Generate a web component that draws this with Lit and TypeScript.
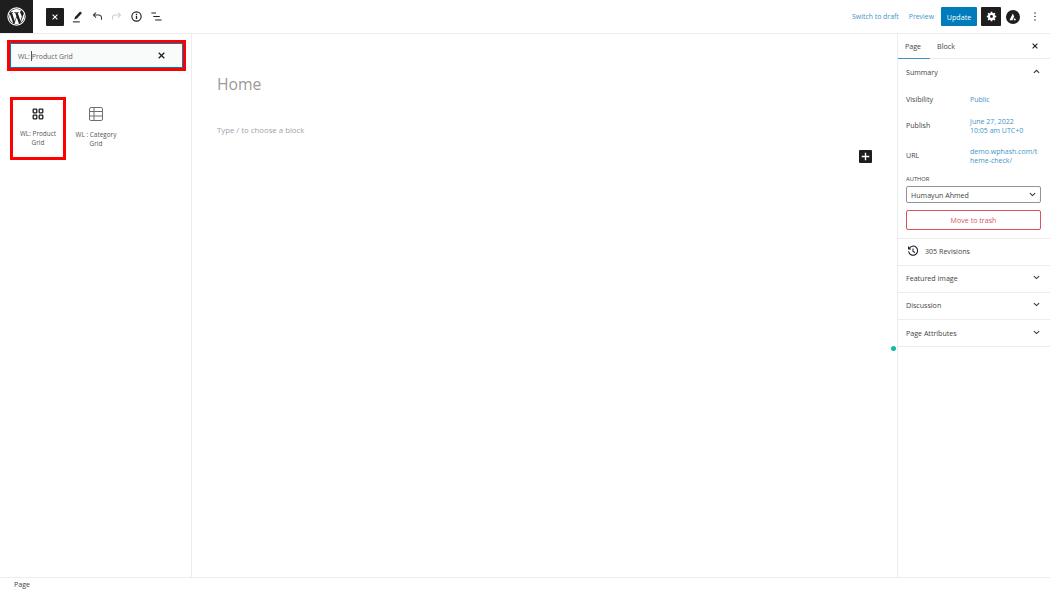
import { LitElement, html, css } from "lit";
import { customElement } from "lit/decorators.js";

const chevDown = html`<svg class="chev" viewBox="0 0 12 8" width="7" height="5"><path d="M1.5 1.5 6 5.8l4.5-4.3" fill="none" stroke="#333" stroke-width="1.8"/></svg>`;
const chevUp = html`<svg class="chev" viewBox="0 0 12 8" width="7" height="5"><path d="M1.5 6.2 6 1.9l4.5 4.3" fill="none" stroke="#333" stroke-width="1.8"/></svg>`;
const closeX = (c = "#1e1e1e", s = 6) => html`<svg viewBox="0 0 10 10" width=${s} height=${s}><path d="M1 1l8 8M9 1l-8 8" fill="none" stroke=${c} stroke-width="1.8"/></svg>`;

@customElement("app-root")
export class AppRoot extends LitElement {
  static styles = css`
    :host { display: block; width: 1050px; height: 590px; background: #fff; color: #444; font-family: "Open Sans", sans-serif; font-size: 7.1px; overflow: hidden; }
    .app { position: relative; display: flex; flex-direction: column; height: 590px; }
    header { display: flex; align-items: center; height: 33px; box-sizing: content-box; flex: none; border-bottom: 1px solid #eceded; margin-bottom: -1px; }
    .logo { width: 33px; height: 33px; background: #1e1e1e; display: flex; align-items: center; justify-content: center; flex: none; }
    .tools { display: flex; align-items: center; margin-left: 13px; }
    .close-tool { width: 18px; height: 18px; background: #1e1e1e; border-radius: 1px; display: flex; align-items: center; justify-content: center; margin-right: 4px; }
    .tool { width: 19.6px; height: 20px; display: flex; align-items: center; justify-content: center; }
    .actions { margin-left: auto; display: flex; align-items: center; padding-right: 13px; }
    .link { color: #3f94c6; font-size: 6.9px; }
    .preview { margin-left: 10px; }
    .update { margin-left: 7px; width: 36px; height: 19px; background: #007cba; color: #fff; border-radius: 1px; display: flex; align-items: center; justify-content: center; font-size: 7.1px; }
    .gear { margin-left: 4px; width: 20px; height: 19px; background: #1e1e1e; border-radius: 1px; display: flex; align-items: center; justify-content: center; }
    .astra { margin-left: 5px; display: flex; }
    .dots { margin-left: 13px; width: 4px; display: flex; justify-content: center; }
    .body { flex: 1; display: flex; min-height: 0; }
    .left { width: 179px; border-right: 1px solid #eceded; flex: none; padding: 7px 5px 0 7px; }
    .search { height: 31px; box-sizing: border-box; border: 3px solid #f00; display: flex; }
    .search-in { flex: 1; border: 1.5px solid #007cba; background: #f9fafa; display: flex; align-items: center; padding: 0 17px 0 7px; color: #666; font-size: 6.9px; }
    .caret { display: inline-block; width: 1px; height: 10px; background: #555; vertical-align: -2px; margin: 0 0 0 1px; }
    .search-in .txt { flex: 1; }
    .tiles { display: flex; margin: 26px 0 0 3px; gap: 2px; }
    .tile { width: 56px; height: 63px; box-sizing: border-box; display: flex; flex-direction: column; align-items: center; text-align: center; color: #555; font-size: 6.4px; line-height: 9px; padding-top: 9px; }
    .tile.on { border: 3px solid #f00; padding-top: 7px; }
    .tile svg { margin-bottom: 8px; flex: none; }
    .main { flex: 1; position: relative; padding: 40px 0 0 25px; min-width: 0; }
    h1 { margin: 0; font-size: 15.7px; font-weight: 400; color: #9a9a9a; line-height: 22px; }
    .hint { margin-top: 30px; color: #9ea3a8; font-size: 7.8px; line-height: 11px; }
    .plus { position: absolute; left: 667px; top: 117px; width: 13px; height: 13px; background: #1e1e1e; border-radius: 1px; display: flex; align-items: center; justify-content: center; }
    .dot { position: absolute; left: 891px; top: 346px; width: 5px; height: 5px; border-radius: 50%; background: #14b8a6; }
    .right { width: 152px; flex: none; border-left: 1px solid #eceded; }
    .tabs { display: flex; align-items: center; height: 25px; border-bottom: 1px solid #eceded; position: relative; }
    .tab { width: 32px; height: 25px; display: flex; align-items: center; justify-content: center; box-sizing: border-box; font-size: 7.1px; padding-right: 2px; }
    .tab.on { border-bottom: 1px solid #3f94c6; margin-bottom: -1px; height: 26px; }
    .tab.b { margin-left: 4px; flex: none; width: 26px; }
    .tabs .x { margin-left: auto; margin-right: 12px; display: flex; }
    .panel { border-bottom: 1px solid #eceded; padding: 0 9px 0 8px; }
    .phead { display: flex; align-items: center; justify-content: space-between; height: 26px; padding: 0 1px 1px 0; box-sizing: border-box; font-size: 7.1px; }
    .phead.low { padding-bottom: 3px; }
    .summary { height: 180px; box-sizing: border-box; }
    .row { display: grid; grid-template-columns: 64px 1fr; align-items: center; line-height: 9.5px; }
    .row .link { word-break: break-all; width: 69px; font-size: 7px; }
    .r1 { margin-top: 8px; height: 14px; }
    .r2, .r3 { margin-top: 8px; height: 22px; }
    .lbl { margin-top: 8px; font-size: 5.8px; line-height: 8px; }
    .select { margin-top: 3px; height: 17px; box-sizing: border-box; border: 1px solid #8f949a; border-radius: 2px; display: flex; align-items: center; justify-content: space-between; padding: 0 4px; }
    .trash { margin-top: 7px; height: 20px; box-sizing: border-box; border: 1px solid #d9545c; border-radius: 2px; color: #d9545c; display: flex; align-items: center; justify-content: center; }
    .rev { display: flex; align-items: center; gap: 6px; padding: 0 8px 2px 9px; box-sizing: border-box; height: 27px; border-bottom: 1px solid #eceded; }
    footer { height: 13px; box-sizing: border-box; flex: none; border-top: 1px solid #eceded; padding-left: 14px; line-height: 13px; }
  `;

  render() {
    return html`<div class="app">
      <header>
        <div class="logo">
          <svg viewBox="0 0 20 20" width="19" height="19"><circle cx="10" cy="10" r="9.1" fill="none" stroke="#fff" stroke-width="1.1"/><path fill="#fff" d="M2.2 10c0 3.1 1.8 5.7 4.4 7L2.9 6.8C2.5 7.8 2.2 8.9 2.2 10zm13.1-.4c0-1-.4-1.6-.7-2.2-.4-.6-.8-1.2-.8-1.8 0-.7.5-1.4 1.3-1.4h.1C13.8 3 12 2.2 10 2.2 7.3 2.2 4.9 3.6 3.5 5.7h.5c.8 0 2.1-.1 2.1-.1.4 0 .5.6.1.6 0 0-.4 0-.9.1l2.9 8.6 1.7-5.2-1.2-3.4c-.4 0-.8-.1-.8-.1-.4 0-.4-.7 0-.6 0 0 1.300.1 2.100.1s2.100-.1 2.100-.1c.4 0 .5.600.1.600 0 0-.4 0-.9.100l2.900 8.500.8-2.600c.3-1.100.6-1.900.6-2.600zm-5.100 1.100l-2.400 7c.7.200 1.500.300 2.200.300.9 0 1.800-.2 2.600-.5l-.1-.1-2.300-6.700zm6.900-4.500c0 .3.1.500.1.900 0 .8-.1 1.600-.6 2.800l-2.400 6.900c2.300-1.400 3.900-3.900 3.900-6.800 0-1-.3-2-.8-2.800z"/></svg>
        </div>
        <div class="tools">
          <div class="close-tool">${closeX("#fff")}</div>
          <div class="tool"><svg viewBox="0 0 14 14" width="13" height="13"><path d="M9.800 1.500l2 1.700-5.400 6-2.800 1.100.7-2.800z" fill="#1e1e1e"/><path d="M2 12.800h7.500" stroke="#1e1e1e" stroke-width="1.100"/></svg></div>
          <div class="tool"><svg viewBox="0 0 14 14" width="13" height="13"><path d="M2.800 5.500h5.700a2.800 2.800 0 0 1 2.800 2.800v2.300M5.400 2.700 2.600 5.500l2.800 2.800" fill="none" stroke="#333" stroke-width="1.100"/></svg></div>
          <div class="tool"><svg viewBox="0 0 14 14" width="13" height="13"><path d="M11.200 5.500H5.500a2.800 2.800 0 0 0-2.800 2.800v2.300M8.600 2.700l2.800 2.800-2.800 2.800" fill="none" stroke="#cfd1d3" stroke-width="1.100"/></svg></div>
          <div class="tool"><svg viewBox="0 0 14 14" width="13" height="13"><circle cx="7" cy="7" r="5" fill="none" stroke="#1e1e1e" stroke-width="1.200"/><path d="M7 6.300v3.500M7 4v1.400" stroke="#1e1e1e" stroke-width="1.400"/></svg></div>
          <div class="tool"><svg viewBox="0 0 14 14" width="13" height="13"><path d="M1.500 3.200h5M3.500 7h7M5.500 10.800h7" stroke="#222" stroke-width="1.200"/></svg></div>
        </div>
        <div class="actions">
          <span class="link">Switch to draft</span>
          <span class="link preview">Preview</span>
          <div class="update">Update</div>
          <div class="gear"><svg viewBox="0 0 14 14" width="11" height="11"><path fill="#fff" fill-rule="evenodd" d="M6 1h2l.3 1.600 1 .4L10.700 2.100l1.300 1.300L11 4.700l.4 1L13 6v2l-1.600.3-.4 1 1 1.400-1.300 1.300-1.400-1-1 .4L8 13H6l-.3-1.600-1-.4-1.400 1-1.300-1.300 1-1.400-.4-1L1 8V6l1.600-.3.4-1-1-1.300 1.300-1.300 1.400 1 1-.4zM7 5.200a1.800 1.800 0 1 0 0 3.600 1.800 1.800 0 0 0 0-3.600z"/></svg></div>
          <div class="astra"><svg viewBox="0 0 14 14" width="14" height="14"><circle cx="7" cy="7" r="7" fill="#1e1e1e"/><path d="M3.500 10.200 6.800 3.500l1.400 3-1.700 3.700zM8.700 7.700l1.400 2.500H7.600z" fill="#fff"/></svg></div>
          <div class="dots"><svg viewBox="0 0 4 14" width="4" height="11"><circle cx="2" cy="2.500" r="1" fill="#333"/><circle cx="2" cy="7" r="1" fill="#333"/><circle cx="2" cy="11.500" r="1" fill="#333"/></svg></div>
        </div>
      </header>
      <div class="body">
        <aside class="left">
          <div class="search"><div class="search-in"><span class="txt">WL:<span class="caret"></span>Product Grid</span>${closeX("#1e1e1e", 7)}</div></div>
          <div class="tiles">
            <div class="tile on">
              <svg viewBox="0 0 14 14" width="14" height="14"><g fill="none" stroke="#1e1e1e" stroke-width="1.300"><rect x="2.200" y="2.200" width="3.600" height="3.600" rx=".5"/><rect x="8.200" y="2.200" width="3.600" height="3.600" rx=".5"/><rect x="2.200" y="8.200" width="3.600" height="3.600" rx=".5"/><rect x="8.200" y="8.200" width="3.600" height="3.600" rx=".5"/></g></svg>
              <span>WL: Product<br />Grid</span>
            </div>
            <div class="tile">
              <svg viewBox="0 0 16 16" width="16" height="16"><g fill="none" stroke="#6a7076" stroke-width="1"><rect x="1.500" y="1.500" width="13" height="13" rx="1.500"/><path d="M1.500 5.500h13M1.500 10h13M6 1.500v13"/></g></svg>
              <span>WL : Category<br />Grid</span>
            </div>
          </div>
        </aside>
        <main class="main">
          <h1>Home</h1>
          <div class="hint">Type / to choose a block</div>
          <div class="plus"><svg viewBox="0 0 10 10" width="9" height="9"><path d="M5 .8v8.400M.8 5h8.400" stroke="#fff" stroke-width="1.500"/></svg></div>
        </main>
        <aside class="right">
          <div class="tabs">
            <div class="tab on">Page</div>
            <div class="tab b">Block</div>
            <span class="x">${closeX()}</span>
          </div>
          <section class="panel summary">
            <div class="phead"><span>Summary</span>${chevUp}</div>
            <div class="row r1"><span>Visibility</span><span class="link">Public</span></div>
            <div class="row r2"><span>Publish</span><span class="link">June 27, 2022<br />10:05 am UTC+0</span></div>
            <div class="row r3"><span>URL</span><span class="link">demo.wphash.com/theme-check/</span></div>
            <div class="lbl">AUTHOR</div>
            <div class="select"><span>Humayun Ahmed</span>${chevDown}</div>
            <div class="trash">Move to trash</div>
          </section>
          <div class="rev"><svg viewBox="0 0 14 14" width="12" height="12"><path d="M2.300 4.200A5.300 5.300 0 1 1 1.800 7.500M1.800 1.800v2.800h2.800M7 4v3.400l2.300 1.300" fill="none" stroke="#1e1e1e" stroke-width="1.200"/></svg><span>305 Revisions</span></div>
          <section class="panel"><div class="phead low"><span>Featured image</span>${chevDown}</div></section>
          <section class="panel"><div class="phead low"><span>Discussion</span>${chevDown}</div></section>
          <section class="panel"><div class="phead"><span>Page Attributes</span>${chevDown}</div></section>
        </aside>
      </div>
      <footer>Page</footer>
      <div class="dot"></div>
    </div>`;
  }
}
